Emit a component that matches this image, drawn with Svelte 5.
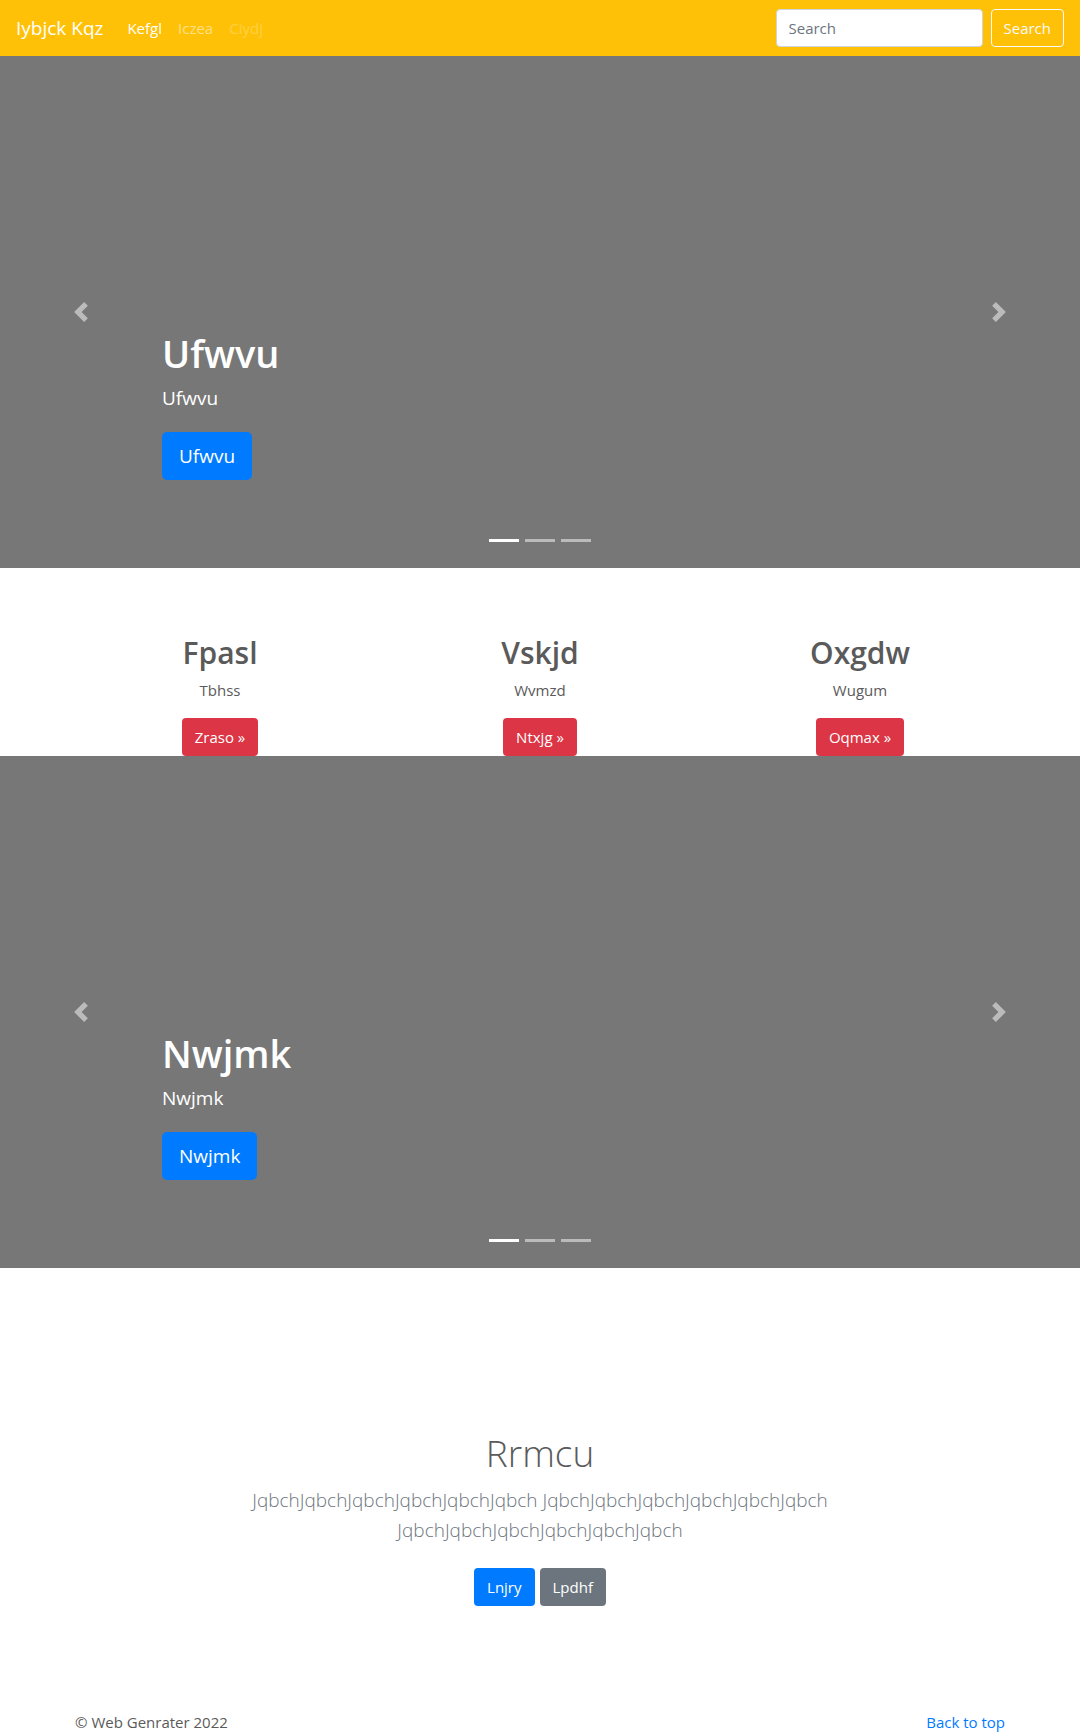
<script>
  const links = [
    { label: 'Kefgl', state: 'active' },
    { label: 'Iczea', state: '' },
    { label: 'Ciydj', state: 'disabled' }
  ];
  const features = [
    { title: 'Fpasl', text: 'Tbhss', action: 'Zraso »' },
    { title: 'Vskjd', text: 'Wvmzd', action: 'Ntxjg »' },
    { title: 'Oxgdw', text: 'Wugum', action: 'Oqmax »' }
  ];
  const word = 'Jqbch'.repeat(6);
</script>

{#snippet carousel(name)}
  <section class="carousel" aria-label={name}>
    <button class="control prev" type="button" aria-label="Previous">
      <svg viewBox="0 0 8 8"><path d="M5.25 0l-4 4 4 4 1.5-1.5-2.5-2.5 2.5-2.5-1.5-1.5z" /></svg>
    </button>
    <div class="caption">
      <h1>{name}</h1>
      <p>{name}</p>
      <a class="btn primary large" href="#top">{name}</a>
    </div>
    <div class="indicators">
      {#each [0, 1, 2] as i}
        <button type="button" class:current={i === 0} aria-label={`Slide ${i + 1}`}></button>
      {/each}
    </div>
    <button class="control next" type="button" aria-label="Next">
      <svg viewBox="0 0 8 8"><path d="M2.75 0l-1.5 1.5 2.5 2.5-2.5 2.5 1.5 1.5 4-4-4-4z" /></svg>
    </button>
  </section>
{/snippet}

<div class="page" id="top">
  <header>
    <a class="brand" href="#top">Iybjck Kqz</a>
    <nav>
      {#each links as link}
        <a class={link.state} href="#top">{link.label}</a>
      {/each}
    </nav>
    <form onsubmit={(e) => e.preventDefault()}>
      <input type="text" placeholder="Search" aria-label="Search" />
      <button class="btn outline" type="submit">Search</button>
    </form>
  </header>

  <main>
    {@render carousel('Ufwvu')}

    <div class="container features">
      {#each features as f}
        <div class="feature">
          <h2>{f.title}</h2>
          <p>{f.text}</p>
          <a class="btn danger" href="#top">{f.action}</a>
        </div>
      {/each}
    </div>

    {@render carousel('Nwjmk')}

    <section class="intro">
      <h1>Rrmcu</h1>
      <p>{word} {word} {word}</p>
      <div class="actions">
        <a class="btn primary" href="#top">Lnjry</a>
        <a class="btn secondary" href="#top">Lpdhf</a>
      </div>
    </section>
  </main>

  <footer class="container">
    <span>© Web Genrater 2022</span>
    <a href="#top">Back to top</a>
  </footer>
</div>

<style>
  :global(body) {
    margin: 0;
    background: #fff;
  }
  .page,
  .page * {
    box-sizing: border-box;
  }
  .page {
    font-family: 'Segoe UI', 'Open Sans', 'Noto Sans', sans-serif;
    font-size: 15px;
    line-height: 24px;
    color: #5a5a5a;
  }
  h1,
  h2,
  p {
    margin: 0;
  }
  a {
    color: #007bff;
    text-decoration: none;
  }
  button,
  input {
    font: inherit;
  }

  header {
    display: flex;
    align-items: center;
    min-height: 56px;
    padding: 0 16px;
    background: #ffc107;
  }
  .brand {
    margin-right: 16px;
    font-size: 19px;
    line-height: 30px;
    color: #fff;
  }
  nav {
    display: flex;
    flex: 1;
  }
  nav a {
    padding: 8px;
    color: rgba(255, 255, 255, 0.5);
  }
  nav .active {
    color: #fff;
  }
  nav .disabled {
    color: rgba(255, 255, 255, 0.25);
  }
  form {
    display: flex;
    gap: 8px;
  }
  input {
    width: 207px;
    height: 38px;
    padding: 6px 12px;
    border: 1px solid #ced4da;
    border-radius: 4px;
    background: #fff;
    color: #495057;
  }
  input::placeholder {
    color: #6c757d;
    opacity: 1;
  }

  .btn {
    display: inline-block;
    padding: 6px 12px;
    border: 1px solid transparent;
    border-radius: 4px;
    color: #fff;
    text-align: center;
    white-space: nowrap;
  }
  .primary {
    background: #007bff;
  }
  .secondary {
    background: #6c757d;
  }
  .danger {
    background: #dc3545;
  }
  .outline {
    border-color: #f8f9fa;
    background: transparent;
    color: #f8f9fa;
  }
  .large {
    padding: 8px 16px;
    border-radius: 5px;
    font-size: 19px;
    line-height: 30px;
  }

  .carousel {
    display: grid;
    grid-template: 512px / 15% 1fr 15%;
    background: #777;
  }
  .control {
    display: flex;
    align-items: center;
    justify-content: center;
    padding: 0;
    border: 0;
    background: none;
    opacity: 0.5;
  }
  .control svg {
    width: 20px;
    height: 20px;
    fill: #fff;
  }
  .prev {
    grid-area: 1 / 1;
  }
  .next {
    grid-area: 1 / 3;
  }
  .caption {
    grid-area: 1 / 2;
    align-self: end;
    padding-bottom: 88px;
    color: #fff;
  }
  .caption h1 {
    margin-bottom: 6px;
    font-size: 38px;
    font-weight: 600;
    line-height: 48px;
  }
  .caption p {
    margin-bottom: 19px;
    font-size: 19px;
    line-height: 30px;
  }
  .caption .btn {
    display: block;
    width: fit-content;
  }
  .indicators {
    grid-area: 1 / 2;
    align-self: end;
    justify-self: center;
    display: flex;
    gap: 6px;
    padding-bottom: 26px;
  }
  .indicators button {
    width: 30px;
    height: 3px;
    padding: 0;
    border: 0;
    background: #fff;
    opacity: 0.5;
  }
  .indicators .current {
    opacity: 1;
  }

  .container {
    max-width: 960px;
    margin: 0 auto;
  }
  .features {
    display: grid;
    grid-template-columns: repeat(3, 1fr);
    padding-top: 66px;
  }
  .feature {
    display: flex;
    flex-direction: column;
    align-items: center;
    text-align: center;
  }
  .feature h2 {
    margin-bottom: 6px;
    font-size: 30px;
    font-weight: 600;
    line-height: 38px;
  }
  .feature p {
    margin-bottom: 16px;
  }

  .intro {
    max-width: 640px;
    margin: 65px auto 0;
    padding: 96px 16px;
    text-align: center;
  }
  .intro h1 {
    margin-bottom: 8px;
    font-size: 37px;
    font-weight: 300;
    line-height: 48px;
  }
  .intro p {
    font-size: 19px;
    font-weight: 300;
    line-height: 30px;
    color: #6c757d;
  }
  .actions {
    display: flex;
    justify-content: center;
    gap: 5px;
    padding: 23px 0 8px;
  }

  footer {
    display: flex;
    justify-content: space-between;
    padding: 0 15px;
  }
</style>
